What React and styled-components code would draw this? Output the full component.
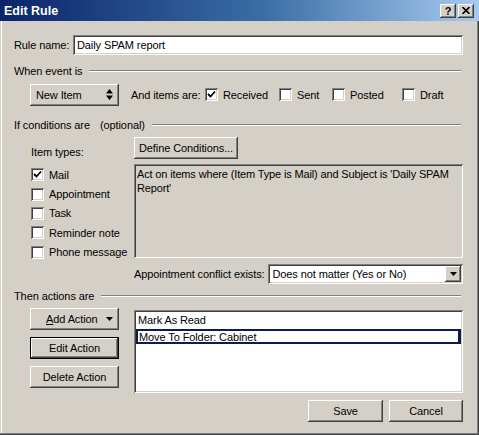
import React from 'react'
import styled, { createGlobalStyle } from 'styled-components'

const Global = createGlobalStyle`
  html, body { margin:0; padding:0; background:#d4d0c8; }
  * { box-sizing:border-box; }
  body {
    font-family: "Liberation Sans", Arial, sans-serif;
    font-size:11px;
    letter-spacing:-0.1px;
    color:#000;
  }
`;

const raised = `
  background:#d4d0c8;
  box-shadow: inset -1px -1px #404040, inset 1px 1px #fff, inset -2px -2px #808080, inset 2px 2px #d4d0c8;
`;
const sunken = `
  box-shadow: inset 1px 1px #808080, inset -1px -1px #fff, inset 2px 2px #404040, inset -2px -2px #d4d0c8;
`;

const Window = styled.div`
  width:479px;
  height:435px;
  background:#d4d0c8;
  display:flex;
  flex-direction:column;
  box-shadow: inset -1px -1px #404040, inset -2px -2px #808080, inset 1px 0 #d4d0c8, inset 2px 0 #fff;
`;

const TitleBar = styled.div`
  height:21px;
  display:flex;
  align-items:center;
  padding:0 5px 0 4px;
  background:linear-gradient(to right, #0a246a 0%, #3a6ea5 55%, #a6caf0 100%);
  color:#fff;
  font-weight:bold;
  font-size:12.5px;
  letter-spacing:0;
`;

const TitleText = styled.div`
  flex:1;
`;

const TitleButton = styled.div`
  ${raised}
  width:16px;
  height:14px;
  margin-left:2px;
  display:flex;
  align-items:center;
  justify-content:center;
  color:#000;
  font-size:11px;
  font-weight:bold;
`;

const Body = styled.div`
  flex:1;
  display:flex;
  flex-direction:column;
  padding:14px 16px 0 14px;
`;

const Row = styled.div`
  display:flex;
  align-items:center;
  height:${p => p.$h || 20}px;
  margin-top:${p => p.$mt || 0}px;
  padding-left:${p => p.$indent || 0}px;
`;

const Label = styled.span`
  width:${p => p.$w ? p.$w + 'px' : 'auto'};
  flex-shrink:0;
  white-space:nowrap;
`;

const TextInput = styled.div`
  ${sunken}
  flex:1;
  height:20px;
  background:#fff;
  padding:0 4px;
  display:flex;
  align-items:center;
`;

const SectionHead = styled.div`
  display:flex;
  align-items:center;
  height:14px;
  margin-top:${p => p.$mt}px;
  padding-right:2px;
  white-space:nowrap;
  &::after {
    content:'';
    flex:1;
    margin-left:${p => p.$gap || 7}px;
    border-top:1px solid #808080;
    border-bottom:1px solid #fff;
  }
`;

const Optional = styled.span`
  margin-left:10px;
`;

const Button = styled.div`
  ${raised}
  width:${p => p.$w}px;
  height:22px;
  display:flex;
  align-items:center;
  justify-content:center;
  flex-shrink:0;
  white-space:nowrap;
  ${p => p.$default && `
    box-shadow: inset 0 0 0 1px #000, inset -2px -2px #404040, inset 2px 2px #fff, inset -3px -3px #808080;
  `}
`;

const SpinButton = styled(Button)`
  justify-content:space-between;
  padding:0 6px 0 6px;
`;

const CheckItem = styled.label`
  display:flex;
  align-items:center;
  width:${p => p.$w ? p.$w + 'px' : 'auto'};
  height:${p => p.$h || 20}px;
  flex-shrink:0;
  white-space:nowrap;
`;

const Box = styled.span`
  ${sunken}
  width:13px;
  height:13px;
  background:#fff;
  margin-right:5px;
  flex-shrink:0;
  display:flex;
  align-items:center;
  justify-content:center;
`;

const Split = styled.div`
  display:grid;
  grid-template-columns:104px 1fr;
  padding-left:16px;
  margin-top:${p => p.$mt}px;
`;

const Column = styled.div`
  display:flex;
  flex-direction:column;
`;

const ItemTypes = styled.div`
  display:flex;
  flex-direction:column;
  padding-top:8px;
  padding-left:1px;
`;

const TypesLabel = styled.div`
  height:14px;
  line-height:14px;
  margin-bottom:6px;
`;

const ConditionText = styled.div`
  ${sunken}
  height:94px;
  margin-top:5px;
  padding:3px 4px 0 3px;
  line-height:14px;
  letter-spacing:-0.15px;
  background:#d4d0c8;
`;

const ConflictRow = styled.div`
  display:flex;
  align-items:center;
  margin-top:6px;
  height:20px;
`;

const Select = styled.div`
  ${sunken}
  flex:1;
  height:20px;
  background:#fff;
  display:flex;
  align-items:center;
  padding:0 2px 0 4px;
  margin-left:4px;
`;

const SelectText = styled.span`
  flex:1;
`;

const DropButton = styled.div`
  ${raised}
  width:16px;
  height:16px;
  display:flex;
  align-items:center;
  justify-content:center;
`;

const ActionButtons = styled.div`
  display:flex;
  flex-direction:column;
  gap:7px;
`;

const ActionList = styled.div`
  ${sunken}
  height:83px;
  margin-top:2px;
  background:#fff;
  padding:2px 2px 0 2px;
`;

const ListRow = styled.div`
  height:16px;
  line-height:14px;
  padding-left:1px;
  border:1px solid ${p => p.$focus ? '#0c1c4e' : 'transparent'};
  ${p => p.$focus && `border-width:2px 3px 2px 2px; line-height:12px; margin-top:1px; height:15px;`}
`;

const Footer = styled.div`
  display:flex;
  justify-content:flex-end;
  gap:6px;
  margin-top:7px;
`;

const Under = styled.span`
  text-decoration:underline;
`;

const Check = () => (
  <svg width="9" height="9" viewBox="0 0 9 9">
    <path d="M1 4 L3.5 6.5 L8 1.5" fill="none" stroke="#000" strokeWidth="1.8" />
  </svg>
);

const UpDown = () => (
  <svg width="7" height="11" viewBox="0 0 7 11">
    <path d="M0 4.5 L3.5 0 L7 4.5 Z M0 6.5 L3.5 11 L7 6.5 Z" fill="#000" />
  </svg>
);

const DownArrow = () => (
  <svg width="7" height="4" viewBox="0 0 7 4">
    <path d="M0 0 L7 0 L3.5 4 Z" fill="#000" />
  </svg>
);

const CloseX = () => (
  <svg width="8" height="7" viewBox="0 0 8 7">
    <path d="M0.5 0 L7.5 7 M7.5 0 L0.5 7" stroke="#000" strokeWidth="1.6" />
  </svg>
);

const Checkbox = ({ checked, children, w, h }) => (
  <CheckItem $w={w} $h={h}>
    <Box>{checked && <Check />}</Box>
    {children}
  </CheckItem>
);

export default function App() {
  const types = [
    ['Mail', true], ['Appointment', false], ['Task', false],
    ['Reminder note', false], ['Phone message', false],
  ];
  return (
    <Window>
      <Global />
      <TitleBar>
        <TitleText>Edit Rule</TitleText>
        <TitleButton>?</TitleButton>
        <TitleButton><CloseX /></TitleButton>
      </TitleBar>
      <Body>
        <Row>
          <Label $w={59}>Rule name:</Label>
          <TextInput>Daily SPAM report</TextInput>
        </Row>

        <SectionHead $mt={9}>When event is</SectionHead>
        <Row $mt={6} $h={21} $indent={16}>
          <SpinButton $w={89}>New Item <UpDown /></SpinButton>
          <Label style={{ marginLeft: 12 }} $w={74}>And items are:</Label>
          <Checkbox checked w={74}>Received</Checkbox>
          <Checkbox w={53}>Sent</Checkbox>
          <Checkbox w={70}>Posted</Checkbox>
          <Checkbox>Draft</Checkbox>
        </Row>

        <SectionHead $mt={13}>If conditions are<Optional>(optional)</Optional></SectionHead>
        <Split $mt={5}>
          <ItemTypes>
            <TypesLabel>Item types:</TypesLabel>
            {types.map(([name, on]) => (
              <Checkbox key={name} checked={on} h={19.4}>{name}</Checkbox>
            ))}
          </ItemTypes>
          <Column>
            <Button $w={104}>Define Conditions...</Button>
            <ConditionText>
              Act on items where (Item Type is Mail) and Subject is 'Daily SPAM Report'
            </ConditionText>
            <ConflictRow>
              <Label>Appointment conflict exists:</Label>
              <Select>
                <SelectText>Does not matter (Yes or No)</SelectText>
                <DropButton><DownArrow /></DropButton>
              </Select>
            </ConflictRow>
          </Column>
        </Split>

        <SectionHead $mt={5}>Then actions are</SectionHead>
        <Split $mt={5}>
          <ActionButtons>
            <SpinButton $w={89} style={{ paddingLeft: 16 }}>
              <span><Under>A</Under>dd Action</span> <DownArrow />
            </SpinButton>
            <Button $w={89} $default>Edit Action</Button>
            <Button $w={89}>Delete Action</Button>
          </ActionButtons>
          <ActionList>
            <ListRow>Mark As Read</ListRow>
            <ListRow $focus>Move To Folder: Cabinet</ListRow>
          </ActionList>
        </Split>

        <Footer>
          <Button $w={75}>Save</Button>
          <Button $w={74}>Cancel</Button>
        </Footer>
      </Body>
    </Window>
  )
}
